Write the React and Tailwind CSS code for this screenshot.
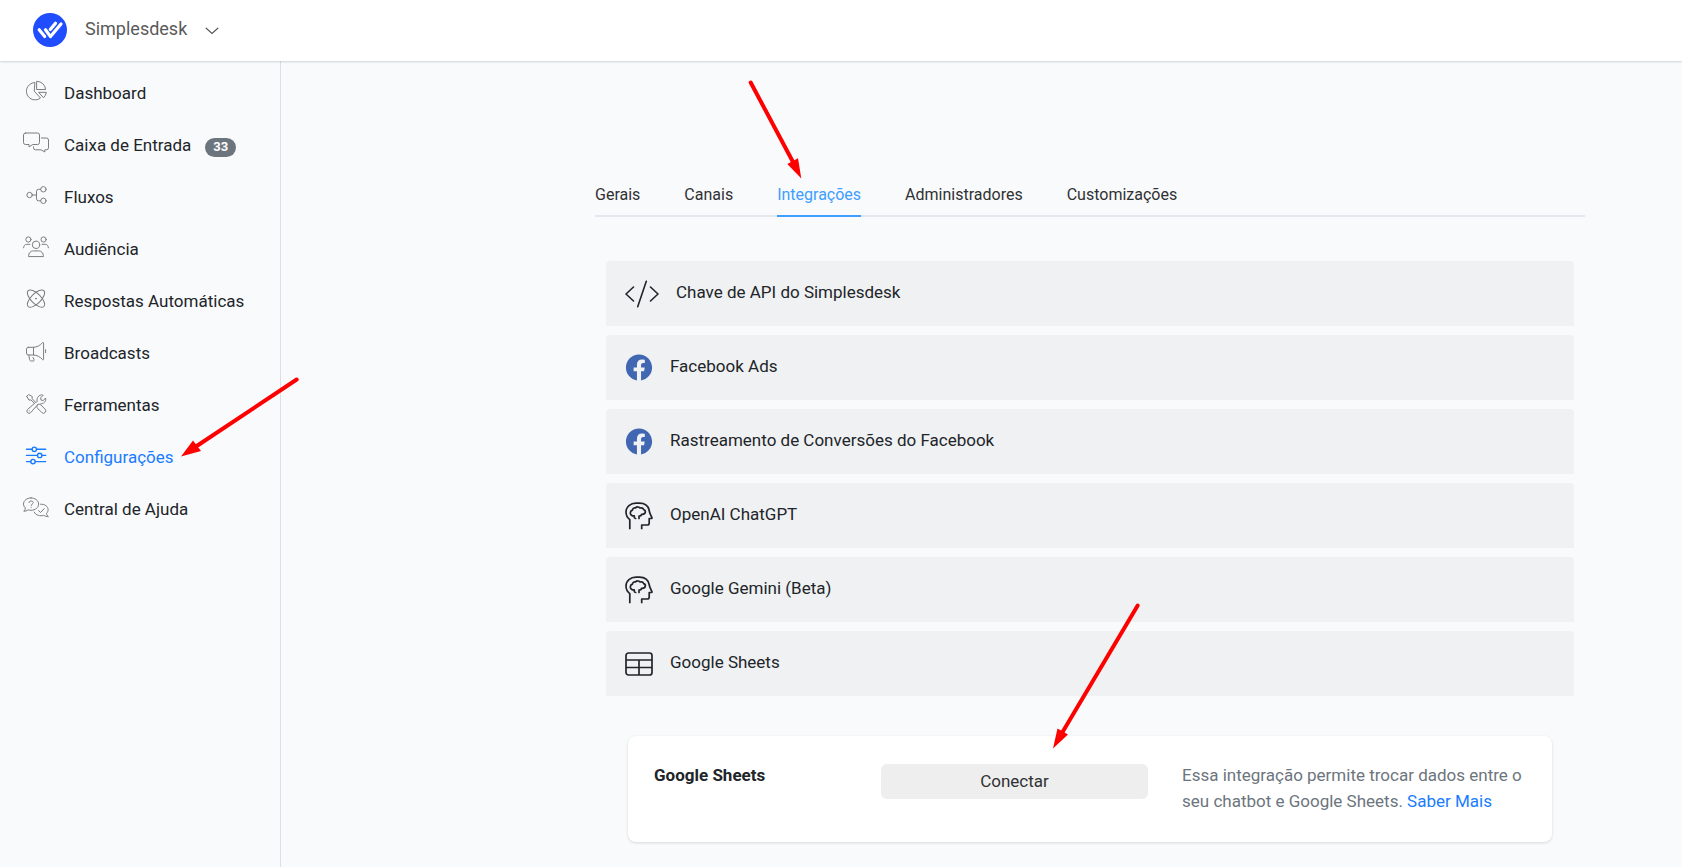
import React from "react";
import { FaFacebook } from "react-icons/fa";

const NavSvg = ({ children, strokeWidth = 1 }) => (
  <svg
    viewBox="0 0 26 22"
    className="mb-1.5 h-[22px] w-[26px] shrink-0"
    fill="none"
    stroke="currentColor"
    strokeWidth={strokeWidth}
    strokeLinejoin="round"
    strokeLinecap="round"
    aria-hidden="true"
  >
    {children}
  </svg>
);

const PieIcon = () => (
  <NavSvg>
    <path d="M11.5 2.5A8.7 8.7 0 1 0 17.5 18L11.5 11.5z" />
    <path d="M14 1.3a8.6 8.6 0 0 1 8.6 8.2H14z" />
    <path d="M16 12.3h7.3a8.4 8.4 0 0 1-2.5 5.2z" />
  </NavSvg>
);

const CommentsIcon = () => (
  <NavSvg>
    <path d="M2.5 1h12a2 2 0 0 1 2 2v7.5a2 2 0 0 1-2 2H9.8L6 14.8v-2.3H2.5a2 2 0 0 1-2-2V3a2 2 0 0 1 2-2z" />
    <path d="M18.3 6h5.2a2 2 0 0 1 2 2v7.8a2 2 0 0 1-2 2h-1.7V20l-3.8-2.2h-5.5a2 2 0 0 1-2-2v-1" />
  </NavSvg>
);

const FlowIcon = () => (
  <NavSvg>
    <circle cx="6.6" cy="11" r="2.7" />
    <circle cx="20.4" cy="5.3" r="2.7" />
    <circle cx="20.4" cy="16.8" r="2.7" />
    <path d="M9.5 11h4M17.6 5.3h-2.1a2 2 0 0 0-2 2v7.5a2 2 0 0 0 2 2h2.1" />
  </NavSvg>
);

const PeopleIcon = () => (
  <NavSvg>
    <circle cx="5.4" cy="3.5" r="2.6" />
    <circle cx="20.6" cy="3.5" r="2.6" />
    <circle cx="13" cy="8.8" r="3.7" />
    <path d="M.6 11.8c0-2.3 1.5-3.5 3.3-3.5h3M25.4 11.8c0-2.3-1.5-3.5-3.3-3.5h-3" />
    <path d="M5.6 20.2c0-3.6 2.2-5.3 5-5.3h4.8c2.8 0 5 1.7 5 5.3z" />
  </NavSvg>
);

const AtomIcon = () => (
  <NavSvg>
    <ellipse cx="13" cy="10.6" rx="11.2" ry="4.9" transform="rotate(45 13 10.6)" />
    <ellipse cx="13" cy="10.6" rx="11.2" ry="4.9" transform="rotate(-45 13 10.6)" />
    <circle cx="13" cy="10.6" r=".5" fill="currentColor" />
  </NavSvg>
);

const MegaphoneIcon = () => (
  <NavSvg>
    <path d="M5.3 7.3h5.2v7.7H5.3a1.8 1.8 0 0 1-1.8-1.8V9.1a1.8 1.8 0 0 1 1.8-1.8z" />
    <path d="M10.5 7.3c3.5 0 6.800-2 9.100-4.700.3-.4 1-.2 1 .4v16.300c0 .6-.6.8-1 .4-2.300-2.700-5.600-4.700-9.100-4.700" />
    <path d="M5.8 15l.8 4.500c.2 1.100.9 1.500 1.800 1.500h1.700c.8 0 1.200-.6 1-1.300L10 17.500M22.600 9.700v3" />
  </NavSvg>
);

const ToolsIcon = () => (
  <NavSvg>
    <path d="M3.8 4.3l1.800-1.800 3.600 2v2.300l3.600 3.600M3.800 4.300l2.100 3.700h2.200l3.400 3.400" />
    <path d="M14.5 12.800c1-.9 2.400-.8 3.300.1l4.300 4.300a2.300 2.300 0 0 1-3.300 3.300l-4.300-4.300c-.9-.9-1-2.400 0-3.400z" />
    <path d="M11.600 11.300l-7.100 6.200a2.200 2.200 0 1 0 3.200 3.100l6-6.800" />
    <path d="M12.900 10.500l1.300-1.300c-.9-3.300 1.700-6.700 5.500-6.300l.4.400-2.400 2.500.3 2.300 2.300.4L22.600 6c.8 3.200-1.800 6-4.900 5.900" />
    <path d="M6.200 18.900h.1" />
  </NavSvg>
);

const SlidersIcon = () => (
  <NavSvg strokeWidth={1.4}>
    <path d="M3.500 5.300H9M13.600 5.300h9.100M3.500 11.400h10.900M19 11.400h3.700M3.500 17.600h4.200M12.300 17.600h10.400" />
    <circle cx="11.3" cy="5.3" r="2.2" />
    <circle cx="16.7" cy="11.4" r="2.2" />
    <circle cx="10" cy="17.6" r="2.2" />
  </NavSvg>
);

const HelpIcon = () => (
  <NavSvg>
    <path d="M8 1.900c4.200 0 7.600 2.700 7.600 6.200S12.200 14.300 8 14.300c-1 0-2-.2-2.900-.5-1.200.9-2.600 1.500-4.300 1.400 1-1 1.500-2.200 1.600-3.300C1.100 10.800.5 9.500.5 8.100c0-3.500 3.300-6.200 7.500-6.200z" />
    <path d="M6 6.600c.1-1.100.9-1.600 2.100-1.600s2.100.6 2.100 1.600c0 1.500-2 1.400-2 2.900M8.200 11.300v.1" />
    <path d="M17.600 8.200c4.300-.2 7.500 2.300 7.500 5.500 0 1.500-.6 2.700-1.600 3.700.1 1.100.7 2.200 1.900 3.200-1.800.1-3.300-.5-4.600-1.300-3.600 1.100-8.100.1-9.600-3.200" />
    <path d="M15.600 14.600l2 1.900 3.600-3.900" />
  </NavSvg>
);

const CodeIcon = () => (
  <svg viewBox="0 0 34 28" className="h-7 w-[34px] shrink-0" fill="none" stroke="currentColor" strokeWidth="1.6" strokeLinecap="round" strokeLinejoin="round" aria-hidden="true">
    <path d="M8.500 7L1 14l7.500 7M25.500 7l7.500 7-7.500 7M21.300 1.300l-8.600 25.400" />
  </svg>
);

const BrainIcon = () => (
  <svg viewBox="0 0 28 28" className="h-7 w-7 shrink-0" fill="none" stroke="currentColor" strokeWidth="1.7" strokeLinecap="square" strokeLinejoin="round" aria-hidden="true">
    <path d="M4.800 26.500v-8.900C2.300 15.700 1 13 1 10 1 4.500 5.500 1.200 11 1.200h3.500c5.500 0 9 3.300 9.800 7.800.2 1.300.6 2.300 1.100 3.300l1.500 3.300c.2.500-.1.900-.6.900h-2.100v4.400c0 1.400-.9 2.100-2.100 2.100h-5.400v3.500" />
    <path strokeLinecap="round" d="M9.300 15.600v-1.700c-2.300.1-4-1-4-2.900 0-1.400.9-2.500 2.100-2.900.2-1.500 1.400-2.500 3.100-2.200C11.500 4.600 14 4.700 15 6c1.700-.5 3.200.3 3.600 1.600 1.400.4 2 1.500 1.700 2.700-.4 1.700-1.900 2.200-3.800 2-.2 1.200-1.200 1.800-2.500 1.800v2.300M9.300 15.600c.2.600.7.900 1.400.9" />
  </svg>
);

const SheetIcon = () => (
  <svg viewBox="0 0 28 24" className="h-6 w-7 shrink-0" fill="none" stroke="currentColor" strokeWidth="1.7" aria-hidden="true">
    <rect x="1" y="1" width="26" height="22" rx="2.500" />
    <path d="M1 8h26M1 15.500h26M14 8v15" />
  </svg>
);

const FacebookIcon = () => <FaFacebook className="h-[27px] w-7 shrink-0 text-[#4267b2]" aria-hidden="true" />;

const navItems = [
  { label: "Dashboard", Icon: PieIcon },
  { label: "Caixa de Entrada", Icon: CommentsIcon, badge: 33 },
  { label: "Fluxos", Icon: FlowIcon },
  { label: "Audiência", Icon: PeopleIcon },
  { label: "Respostas Automáticas", Icon: AtomIcon },
  { label: "Broadcasts", Icon: MegaphoneIcon },
  { label: "Ferramentas", Icon: ToolsIcon },
  { label: "Configurações", Icon: SlidersIcon, active: true },
  { label: "Central de Ajuda", Icon: HelpIcon },
];

const tabs = ["Gerais", "Canais", "Integrações", "Administradores", "Customizações"];

const integrations = [
  { label: "Chave de API do Simplesdesk", Icon: CodeIcon },
  { label: "Facebook Ads", Icon: FacebookIcon },
  { label: "Rastreamento de Conversões do Facebook", Icon: FacebookIcon },
  { label: "OpenAI ChatGPT", Icon: BrainIcon },
  { label: "Google Gemini (Beta)", Icon: BrainIcon },
  { label: "Google Sheets", Icon: SheetIcon },
];

function Header() {
  return (
    <header className="z-10 flex h-[61px] shrink-0 items-center bg-white pb-0.5 pl-[33px] shadow-[0_1px_2px_rgba(0,0,0,0.16)]">
      <svg viewBox="0 0 34 34" className="h-[34px] w-[34px]" fill="none" aria-hidden="true">
        <circle cx="17" cy="17" r="17" fill="#1f4dff" />
        <g stroke="#fff" strokeWidth="3.2" strokeLinecap="round" strokeLinejoin="round">
          <path d="M6.200 16.700l5.500 6.800" />
          <path d="M12.500 16.700l5 6.900L28 11" />
          <path d="M17.300 16.500l5.200-6.300" />
        </g>
      </svg>
      <button type="button" className="ml-[18px] flex items-center gap-[18px] pb-0.5 text-lg text-[#5a5a5a]">
        Simplesdesk
        <svg viewBox="0 0 14 8" className="mt-1 h-2 w-3.5" fill="none" stroke="currentColor" strokeWidth="1.2" strokeLinecap="round" aria-hidden="true">
          <path d="M1.200 1.200L7 6.500l5.800-5.300" />
        </svg>
      </button>
    </header>
  );
}

function Sidebar() {
  return (
    <nav className="w-[281px] shrink-0 border-r border-[#dcdfe3] pt-[7px]">
      <ul>
        {navItems.map(({ label, Icon, badge, active }) => (
          <li key={label}>
            <a
              href="#"
              aria-current={active ? "page" : undefined}
              className={"flex h-[52px] items-center pl-[23px] text-[17px] " + (active ? "text-[#1a7cff]" : "text-[#212529]")}
            >
              <span className={active ? "" : "text-[#7d7d7d]"}>
                <Icon />
              </span>
              <span className="ml-[15px]">{label}</span>
              {badge && (
                <span className="mt-0.5 ml-3.5 flex h-[19px] w-[31px] items-center justify-center rounded-full bg-[#6c757d] text-[13px] font-bold text-white">
                  {badge}
                </span>
              )}
            </a>
          </li>
        ))}
      </ul>
    </nav>
  );
}

function Arrows() {
  return (
    <svg className="pointer-events-none absolute top-0 left-0 z-20 h-[867px] w-[1682px]" viewBox="0 0 1682 867" fill="#f00" stroke="#f00" strokeWidth="4" strokeLinecap="round" aria-hidden="true">
      <path d="M750.700 82.500L793 162" />
      <path stroke="none" d="M801.300 178.500L787.300 164l10.700-5.700z" />
      <path d="M296.700 379.500L196 446.500" />
      <path stroke="none" d="M181 456.500l12-16 8 10.500z" />
      <path d="M1137.700 605.500L1062 733" />
      <path stroke="none" d="M1053 748.500l4.500-20 10.500 6z" />
    </svg>
  );
}

export default function App() {
  return (
    <div className="relative flex min-h-screen flex-col overflow-x-hidden bg-[#f9fafc] font-['Roboto',sans-serif] text-[#212529]">
      <Header />
      <div className="flex flex-1">
        <Sidebar />
        <main className="min-w-0 flex-1 pt-[114px] pr-[97px] pl-[314px]">
          <div role="tablist" className="flex h-[42px] gap-11 border-b-2 border-[#e4e7ed] text-base">
            {tabs.map((tab) => {
              const selected = tab === "Integrações";
              return (
                <button
                  key={tab}
                  type="button"
                  role="tab"
                  aria-selected={selected}
                  className={
                    "-mb-0.5 border-b-2 " +
                    (selected ? "border-[#409eff] text-[#409eff]" : "border-transparent text-[#303133]")
                  }
                >
                  {tab}
                </button>
              );
            })}
          </div>

          <div className="mt-11 flex flex-col gap-[9px] px-[11px]">
            {integrations.map(({ label, Icon }) => (
              <button
                key={label}
                type="button"
                className="flex h-[65px] w-full items-center gap-[17px] rounded-t bg-[#f0f1f3] pl-[19px] text-left text-[17px]"
              >
                <Icon />
                <span className="mb-0.5">{label}</span>
              </button>
            ))}
          </div>

          <section className="mx-[33px] mt-10 mb-5 flex items-start rounded-lg bg-white px-[26px] pt-[26px] pb-7 shadow-[0_1px_3px_rgba(0,0,0,0.14)]">
            <h2 className="w-[227px] shrink-0 text-[17px] leading-[26px] font-bold">Google Sheets</h2>
            <button type="button" className="mt-0.5 h-[35px] min-w-0 flex-1 rounded-md bg-[#eee] text-[17px] text-[#303133]">
              Conectar
            </button>
            <p className="ml-[34px] w-[344px] shrink-0 text-[17px] leading-[26px] text-[#6c757d]">
              Essa integração permite trocar dados entre o seu chatbot e Google Sheets.{" "}
              <a href="#" className="text-[#1a7cff]">Saber Mais</a>
            </p>
          </section>
        </main>
      </div>
      <Arrows />
    </div>
  );
}
